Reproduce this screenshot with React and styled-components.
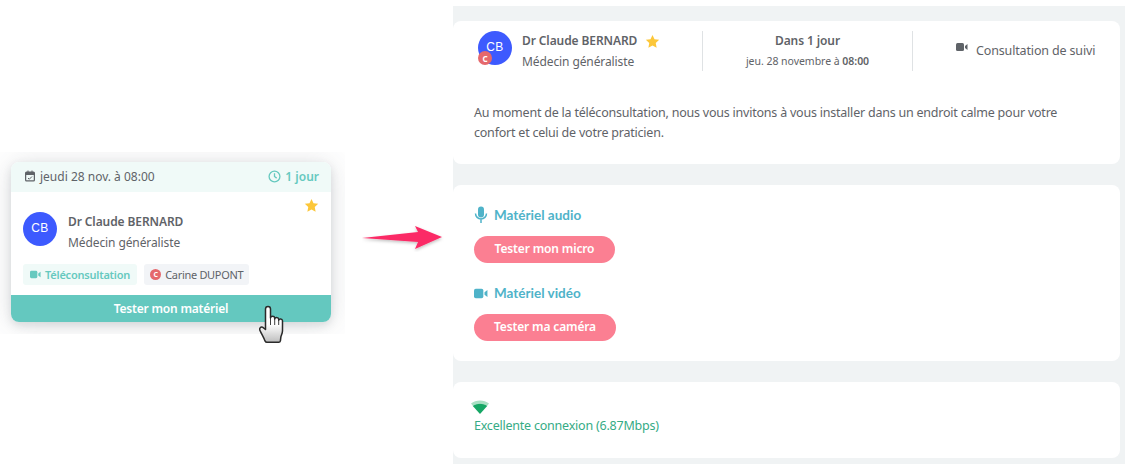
import React from 'react';
import styled, { createGlobalStyle } from 'styled-components';

const Global = createGlobalStyle`
  html, body { margin: 0; padding: 0; background: #fff; }
  body { font-family: "Noto Sans", "Open Sans", sans-serif; color: #5f6368; }
  * { box-sizing: border-box; }
`;

const Page = styled.div`
  display: flex;
  width: 1125px;
  height: 464px;
  overflow: hidden;
`;

const LeftCol = styled.div`
  width: 453px;
  flex: none;
  display: flex;
  align-items: flex-start;
  padding-top: 152px;
`;

const CardSlot = styled.div`
  position: relative;
  width: 345px;
  flex: none;
`;

const CardFrame = styled.div`
  height: 182px;
  padding: 10px 14px 12px 11px;
  overflow: hidden;
`;

const Card = styled.div`
  width: 320px;
  height: 160px;
  background: #fff;
  border-radius: 8px;
  display: flex;
  flex-direction: column;
  box-shadow: 0 3px 8px rgba(60, 70, 80, 0.14), 0 2px 30px rgba(60, 70, 80, 0.16);
`;

const CardHead = styled.div`
  height: 30px;
  flex: none;
  padding: 0 12px 2px 13px;
  background: #f0faf8;
  border-radius: 8px 8px 0 0;
  display: flex;
  align-items: center;
  justify-content: space-between;
  font-size: 12px;
`;

const HeadItem = styled.span`
  display: flex;
  align-items: center;
  gap: 4px;
  color: ${props => props.$accent ? '#66c9bf' : '#5f6368'};
  font-weight: ${props => props.$accent ? 600 : 400};
`;

const CardBody = styled.div`
  flex: 1;
  padding: 20px 12px 0;
  position: relative;
`;

const StarCorner = styled.div`
  position: absolute;
  top: 6px;
  right: 12px;
  line-height: 0;
`;

const Doctor = styled.div`
  display: flex;
  align-items: flex-start;
  gap: ${props => props.$gap}px;
`;

const Avatar = styled.div`
  position: relative;
  width: 34px;
  height: 34px;
  flex: none;
  border-radius: 50%;
  background: #3d5afe;
  color: #fff;
  font-family: "Liberation Sans", sans-serif;
  font-size: 12px;
  letter-spacing: 0.4px;
  padding-bottom: 2px;
  display: flex;
  align-items: center;
  justify-content: center;
`;

const AvatarBadge = styled.span`
  position: absolute;
  left: 0;
  bottom: 0;
  width: 14px;
  height: 14px;
  border-radius: 50%;
  background: #e5686c;
  color: #fff;
  font-family: "Noto Sans", sans-serif;
  font-size: 8px;
  font-weight: 700;
  letter-spacing: 0;
  display: flex;
  align-items: center;
  justify-content: center;
`;

const DocText = styled.div`
  display: flex;
  flex-direction: column;
  gap: 2.5px;
  margin-top: 1px;
`;

const DocName = styled.div`
  display: flex;
  align-items: center;
  gap: 8px;
  font-size: 12px;
  line-height: 18px;
  font-weight: 600;
  letter-spacing: -0.1px;
`;

const DocRole = styled.div`
  font-size: 12px;
  line-height: 18px;
  letter-spacing: -0.1px;
`;

const Tags = styled.div`
  display: flex;
  gap: 7px;
  margin-top: 12.5px;
`;

const Tag = styled.span`
  height: 21px;
  padding: 0 ${props => props.$teal ? 7 : 6}px;
  border-radius: 3px;
  display: flex;
  align-items: center;
  gap: 4px;
  font-size: 11px;
  letter-spacing: ${props => props.$teal ? -0.22 : -0.3}px;
  background: ${props => props.$teal ? '#f0faf8' : '#f2f4f7'};
  color: ${props => props.$teal ? '#66c9bf' : '#5f6368'};
  font-weight: ${props => props.$teal ? 600 : 400};
`;

const TagDot = styled.span`
  width: 11px;
  height: 11px;
  border-radius: 50%;
  background: #e5686c;
  color: #fff;
  font-size: 7px;
  font-weight: 700;
  display: flex;
  align-items: center;
  justify-content: center;
`;

const CardAction = styled.div`
  height: 27px;
  flex: none;
  background: #64c8bf;
  border-radius: 0 0 8px 8px;
  color: #fff;
  font-size: 12px;
  font-weight: 600;
  letter-spacing: -0.2px;
  display: flex;
  align-items: center;
  justify-content: center;
`;

const Cursor = styled.svg`
  position: absolute;
  left: 259px;
  top: 153px;
`;

const Arrow = styled.svg`
  flex: none;
  margin: 72px 0 0 17px;
`;

const RightCol = styled.div`
  width: 672px;
  flex: none;
  margin-top: 6px;
  padding: 15px 5px 0 0;
  background: #f0f3f4;
  display: flex;
  flex-direction: column;
  gap: 21px;
`;

const Panel = styled.section`
  height: ${props => props.$h}px;
  padding: ${props => props.$pad};
  background: #fff;
  border-radius: 8px;
`;

const Summary = styled.div`
  display: flex;
  height: 40px;
`;

const SummaryLeft = styled.div`
  width: 250px;
  padding-left: 25px;
  border-right: 1px solid #dfe2e4;
`;

const SummaryMid = styled.div`
  width: 210px;
  padding-top: 1px;
  border-right: 1px solid #dfe2e4;
  display: flex;
  flex-direction: column;
  align-items: center;
  gap: 2px;
`;

const WhenTitle = styled.div`
  font-size: 12px;
  line-height: 18px;
  font-weight: 600;
  letter-spacing: -0.1px;
`;

const WhenDate = styled.div`
  font-size: 10.5px;
  line-height: 18px;
  letter-spacing: -0.03px;
  b { font-weight: 600; }
`;

const SummaryRight = styled.div`
  flex: 1;
  padding: 11px 0 0 43px;
  display: flex;
  align-items: flex-start;
  gap: 8px;
  font-size: 12.5px;
  line-height: 18px;
  letter-spacing: -0.15px;
  white-space: nowrap;
`;

const Intro = styled.p`
  margin: 32px 0 0;
  padding-left: 21px;
  width: 620px;
  font-size: 12.5px;
  line-height: 20px;
  letter-spacing: -0.22px;
`;

const Section = styled.div`
  margin-bottom: 20px;
`;

const SectionTitle = styled.h3`
  margin: 0 0 11px;
  height: 20px;
  display: flex;
  align-items: center;
  gap: 6px;
  font-family: "Lato", sans-serif;
  font-size: 13.5px;
  font-weight: 700;
  color: #4fb3c9;
`;

const TestButton = styled.button`
  width: ${props => props.$w}px;
  height: 27px;
  padding: 0 0 2px;
  border: 0;
  border-radius: 14px;
  background: #fb7f92;
  color: #fff;
  font-family: inherit;
  font-size: 12px;
  font-weight: 600;
  letter-spacing: -0.15px;
  display: block;
`;

const Wifi = styled.svg`
  display: block;
  margin: 0 0 3px -3px;
`;

const Connexion = styled.div`
  font-size: 12.5px;
  line-height: 18px;
  letter-spacing: -0.22px;
  color: #35ab85;
`;

const Star = ({ size }) => (
  <svg width={size} height={size} viewBox="0 0 24 24">
    <path fill="#fcc73a" d="M12 1.5l3.2 6.9 7.5.9-5.5 5.2 1.4 7.5-6.6-3.7-6.6 3.7 1.4-7.5-5.5-5.2 7.5-.9z" />
  </svg>
);

const Camera = ({ color, w, h }) => (
  <svg width={w} height={h} viewBox="0 0 24 18">
    <rect x="0" y="1" width="16" height="16" rx="3" fill={color} />
    <path fill={color} d="M18 7l5-4v12l-5-4z" />
  </svg>
);

export default function App() {
  return (
    <Page>
      <Global />
      <LeftCol>
        <CardSlot>
          <CardFrame>
            <Card>
              <CardHead>
                <HeadItem>
                  <svg width="12" height="12" viewBox="0 0 24 24">
                    <path fill="#5f6368" d="M5 3h2V1h2v2h6V1h2v2h2a3 3 0 013 3v14a3 3 0 01-3 3H5a3 3 0 01-3-3V6a3 3 0 013-3zm-.5 7v10c0 .3.2.5.5.5h14c.3 0 .5-.2.5-.5V10z" />
                    <path fill="none" stroke="#5f6368" strokeWidth="2" d="M8 16l2.5 2.5L16 13" />
                  </svg>
                  jeudi 28 nov. à 08:00
                </HeadItem>
                <HeadItem $accent>
                  <svg width="13" height="13" viewBox="0 0 24 24" fill="none" stroke="#66c9bf" strokeWidth="2.4">
                    <circle cx="12" cy="12" r="10" />
                    <path d="M12 6v6l4 3" />
                  </svg>
                  1 jour
                </HeadItem>
              </CardHead>
              <CardBody>
                <StarCorner><Star size={15} /></StarCorner>
                <Doctor $gap={11}>
                  <Avatar>CB</Avatar>
                  <DocText>
                    <DocName>Dr Claude BERNARD</DocName>
                    <DocRole>Médecin généraliste</DocRole>
                  </DocText>
                </Doctor>
                <Tags>
                  <Tag $teal><Camera color="#66c9bf" w={11} h={9} />Téléconsultation</Tag>
                  <Tag><TagDot>C</TagDot>Carine DUPONT</Tag>
                </Tags>
              </CardBody>
              <CardAction>Tester mon matériel</CardAction>
            </Card>
          </CardFrame>
          <Cursor width="28" height="40" viewBox="0 0 28 40">
            <defs>
              <linearGradient id="hand" x1="0" y1="0" x2="0" y2="1">
                <stop offset="0.5" stopColor="#fff" />
                <stop offset="1" stopColor="#bdbdbd" />
              </linearGradient>
            </defs>
            <path
              fill="url(#hand)"
              stroke="#2a2a2a"
              strokeWidth="1.5"
              strokeLinejoin="round"
              d="M6.5 4c0-3.500 5-3.500 5 0v9c.3-2.200 4-2.200 4.200 0v1c.3-2 3.800-2 4 .3v.9c.4-1.800 3.600-1.600 3.800.6v10c0 2.500-1 4-1.600 6l-.5 4c-.2 1-.8 1.500-1.700 1.500H8c-1 0-1.600-.5-2-1.400C4.500 32 2.500 29 1 25.500c-1-2 .5-4 2.500-3.400l3 2.400z"
            />
            <path fill="none" stroke="#2a2a2a" strokeWidth="0.9" d="M11.500 13v7M15.700 14v6M19.700 15v5" />
          </Cursor>
        </CardSlot>
        <Arrow width="82" height="28" viewBox="0 0 82 28">
          <defs>
            <filter id="arrowShadow" x="-10%" y="-30%" width="120%" height="170%">
              <feDropShadow dx="0" dy="1.500" stdDeviation="1.500" floodColor="#000" floodOpacity="0.25" />
            </filter>
          </defs>
          <path filter="url(#arrowShadow)" fill="#fb2c66" d="M0 14l56-6-3-6 27 11-27 12 3-7z" />
        </Arrow>
      </LeftCol>
      <RightCol>
        <Panel $h={143} $pad="10px 0 0 0">
          <Summary>
            <SummaryLeft>
              <Doctor $gap={10}>
                <Avatar>CB<AvatarBadge>C</AvatarBadge></Avatar>
                <DocText>
                  <DocName>Dr Claude BERNARD <Star size={15} /></DocName>
                  <DocRole>Médecin généraliste</DocRole>
                </DocText>
              </Doctor>
            </SummaryLeft>
            <SummaryMid>
              <WhenTitle>Dans 1 jour</WhenTitle>
              <WhenDate>jeu. 28 novembre à <b>08:00</b></WhenDate>
            </SummaryMid>
            <SummaryRight>
              <Camera color="#5f6368" w={12} h={10} />
              <span>Consultation de suivi</span>
            </SummaryRight>
          </Summary>
          <Intro>
            Au moment de la téléconsultation, nous vous invitons à vous installer dans un endroit calme pour votre confort et celui de votre praticien.
          </Intro>
        </Panel>
        <Panel $h={176} $pad="20px 0 0 21px">
          <Section>
            <SectionTitle>
              <svg width="14" height="18" viewBox="0 0 14 18">
                <rect x="4" y="0.500" width="6" height="11" rx="3" fill="#4fb3c9" />
                <path fill="none" stroke="#4fb3c9" strokeWidth="1.500" d="M1.500 7.500a5.500 5.500 0 0011 0M7 13v4" />
              </svg>
              Matériel audio
            </SectionTitle>
            <TestButton $w={141}>Tester mon micro</TestButton>
          </Section>
          <Section>
            <SectionTitle>
              <Camera color="#4fb3c9" w={14} h={11} />
              Matériel vidéo
            </SectionTitle>
            <TestButton $w={142}>Tester ma caméra</TestButton>
          </Section>
        </Panel>
        <Panel $h={76} $pad="18px 0 0 21px">
          <Wifi width="18" height="14" viewBox="0 0 18 14">
            <path fill="#a9e0c3" d="M0 3.500C5-.6 13-.6 18 3.500L16 6C12 3 6 3 2 6z" />
            <path fill="#16a765" d="M1.800 6c4.200-3 10.200-3 14.400 0L9 14z" />
          </Wifi>
          <Connexion>Excellente connexion (6.87Mbps)</Connexion>
        </Panel>
      </RightCol>
    </Page>
  );
}
